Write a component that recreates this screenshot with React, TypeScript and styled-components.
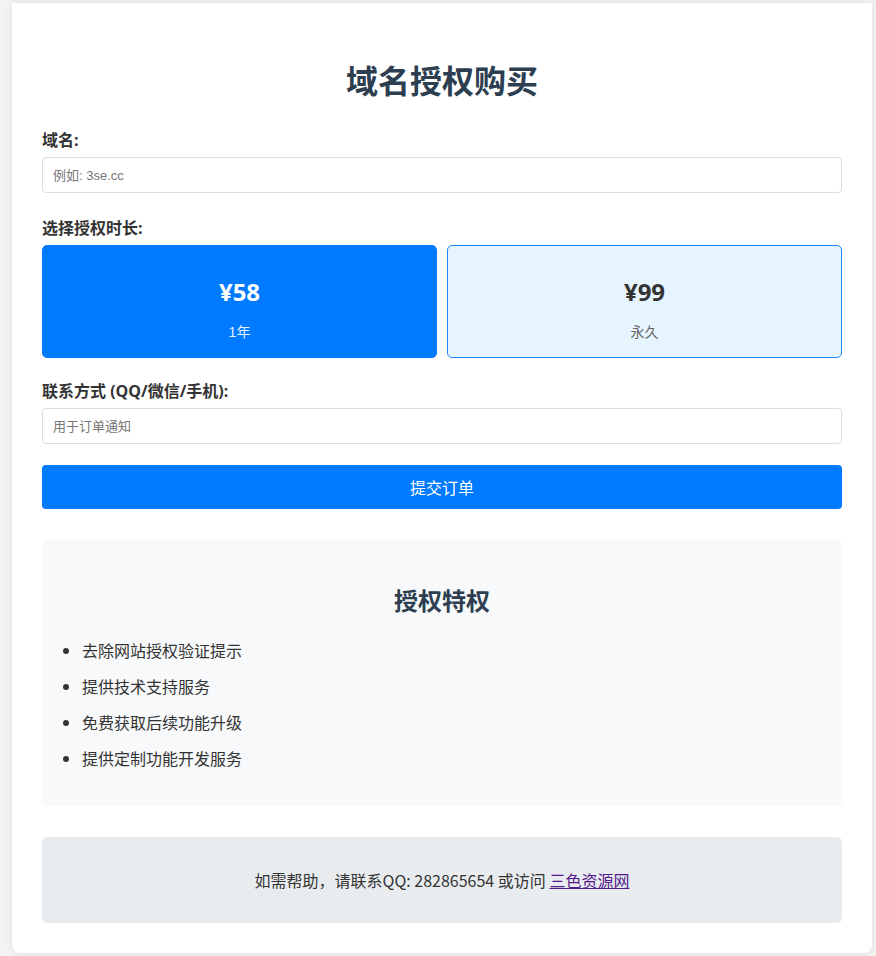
import React, { useState } from "react";
import styled, { createGlobalStyle } from "styled-components";

const GlobalStyle = createGlobalStyle`
  html, body {
    margin: 0;
    padding: 0;
    background: #f4f4f4;
  }
  body {
    font-family: "Open Sans", "Noto Sans CJK SC", sans-serif;
    color: #333;
  }
  * { box-sizing: border-box; }
`;

const Page = styled.div`
  padding: 3px 4px 3px 12px;
`;

const Card = styled.div`
  background: #fff;
  border-radius: 0 0 8px 8px;
  box-shadow: 0 0 10px rgba(0, 0, 0, 0.1);
  padding: 30px;
`;

const Title = styled.h1`
  margin: 22px 0 26px;
  font-size: 32px;
  line-height: 48px;
  font-weight: 700;
  text-align: center;
  color: #2c3e50;
  font-family: "Noto Sans CJK SC", sans-serif;
`;

const Group = styled.div<{ $gap: number }>`
  margin-bottom: ${(p) => p.$gap}px;
`;

const Label = styled.label`
  display: block;
  font-size: 16px;
  line-height: 23px;
  font-weight: 700;
  color: #333;
  margin-bottom: 5px;
  font-family: "Open Sans", "Noto Sans CJK SC", sans-serif;
`;

const Input = styled.input`
  display: block;
  width: 100%;
  height: 36px;
  padding: 0 10px;
  border: 1px solid #ddd;
  border-radius: 4px;
  font-size: 13px;
  font-family: "Liberation Sans", "Noto Sans CJK SC", sans-serif;
  color: #333;
  outline: none;
  &::placeholder {
    color: #777;
  }
`;

const Options = styled.div`
  display: grid;
  grid-template-columns: 1fr 1fr;
  gap: 10px;
`;

const Option = styled.div<{ $active: boolean }>`
  height: 113px;
  padding-top: 30px;
  border-radius: 5px;
  border: 1px solid ${(p) => (p.$active ? "#007bff" : "#1e88ff")};
  background: ${(p) => (p.$active ? "#007bff" : "#e6f4fe")};
  color: ${(p) => (p.$active ? "#fff" : "#333")};
  display: flex;
  flex-direction: column;
  align-items: center;
  cursor: pointer;
`;

const Price = styled.div`
  font-size: 24px;
  line-height: 32px;
  font-weight: 700;
  font-family: "Open Sans", "Noto Sans CJK SC", sans-serif;
`;

const Period = styled.div<{ $active: boolean }>`
  margin-top: 15px;
  font-size: 14px;
  line-height: 18px;
  color: ${(p) => (p.$active ? "#e8f1ff" : "#666")};
  font-family: "Liberation Sans", "Noto Sans CJK SC", sans-serif;
`;

const Submit = styled.button`
  display: block;
  width: 100%;
  height: 44px;
  margin-top: 21px;
  border: none;
  border-radius: 4px;
  background: #007bff;
  color: #fff;
  font-size: 16px;
  font-family: "Noto Sans CJK SC", sans-serif;
  cursor: pointer;
`;

const Perks = styled.div`
  margin-top: 31px;
  background: #f8f9fa;
  border-radius: 5px;
  padding: 20px 20px 23px;
`;

const PerksTitle = styled.h3`
  margin: 22px 0 21px;
  font-size: 24px;
  line-height: 36px;
  font-weight: 700;
  text-align: center;
  color: #2c3e50;
  font-family: "Noto Sans CJK SC", sans-serif;
`;

const List = styled.ul`
  margin: 0;
  padding-left: 20px;
`;

const Item = styled.li`
  font-size: 16px;
  line-height: 22px;
  margin-bottom: 14px;
  color: #333;
  font-family: "Noto Sans CJK SC", sans-serif;
`;

const Help = styled.div`
  margin-top: 31px;
  background: #e9ecef;
  border-radius: 5px;
  padding: 32px 20px;
  text-align: center;
  font-size: 16px;
  line-height: 22px;
  color: #333;
  font-family: "Noto Sans CJK SC", sans-serif;
`;

const Link = styled.a`
  color: #551a8b;
  text-decoration: underline;
`;

const plans = [
  { price: "¥58", period: "1年" },
  { price: "¥99", period: "永久" },
];

const perks = [
  "去除网站授权验证提示",
  "提供技术支持服务",
  "免费获取后续功能升级",
  "提供定制功能开发服务",
];

export default function App() {
  const [selected, setSelected] = useState(0);
  return (
    <>
      <GlobalStyle />
      <Page>
        <Card>
          <Title>域名授权购买</Title>
          <Group $gap={24}>
            <Label>域名:</Label>
            <Input placeholder="例如: 3se.cc" />
          </Group>
          <Group $gap={22}>
            <Label>选择授权时长:</Label>
            <Options>
              {plans.map((p, i) => (
                <Option key={p.period} $active={selected === i} onClick={() => setSelected(i)}>
                  <Price>{p.price}</Price>
                  <Period $active={selected === i}>{p.period}</Period>
                </Option>
              ))}
            </Options>
          </Group>
          <Group $gap={0}>
            <Label>联系方式 (QQ/微信/手机):</Label>
            <Input placeholder="用于订单通知" />
          </Group>
          <Submit>提交订单</Submit>
          <Perks>
            <PerksTitle>授权特权</PerksTitle>
            <List>
              {perks.map((t) => (
                <Item key={t}>{t}</Item>
              ))}
            </List>
          </Perks>
          <Help>
            如需帮助，请联系QQ: 282865654 或访问 <Link href="#">三色资源网</Link>
          </Help>
        </Card>
      </Page>
    </>
  );
}
